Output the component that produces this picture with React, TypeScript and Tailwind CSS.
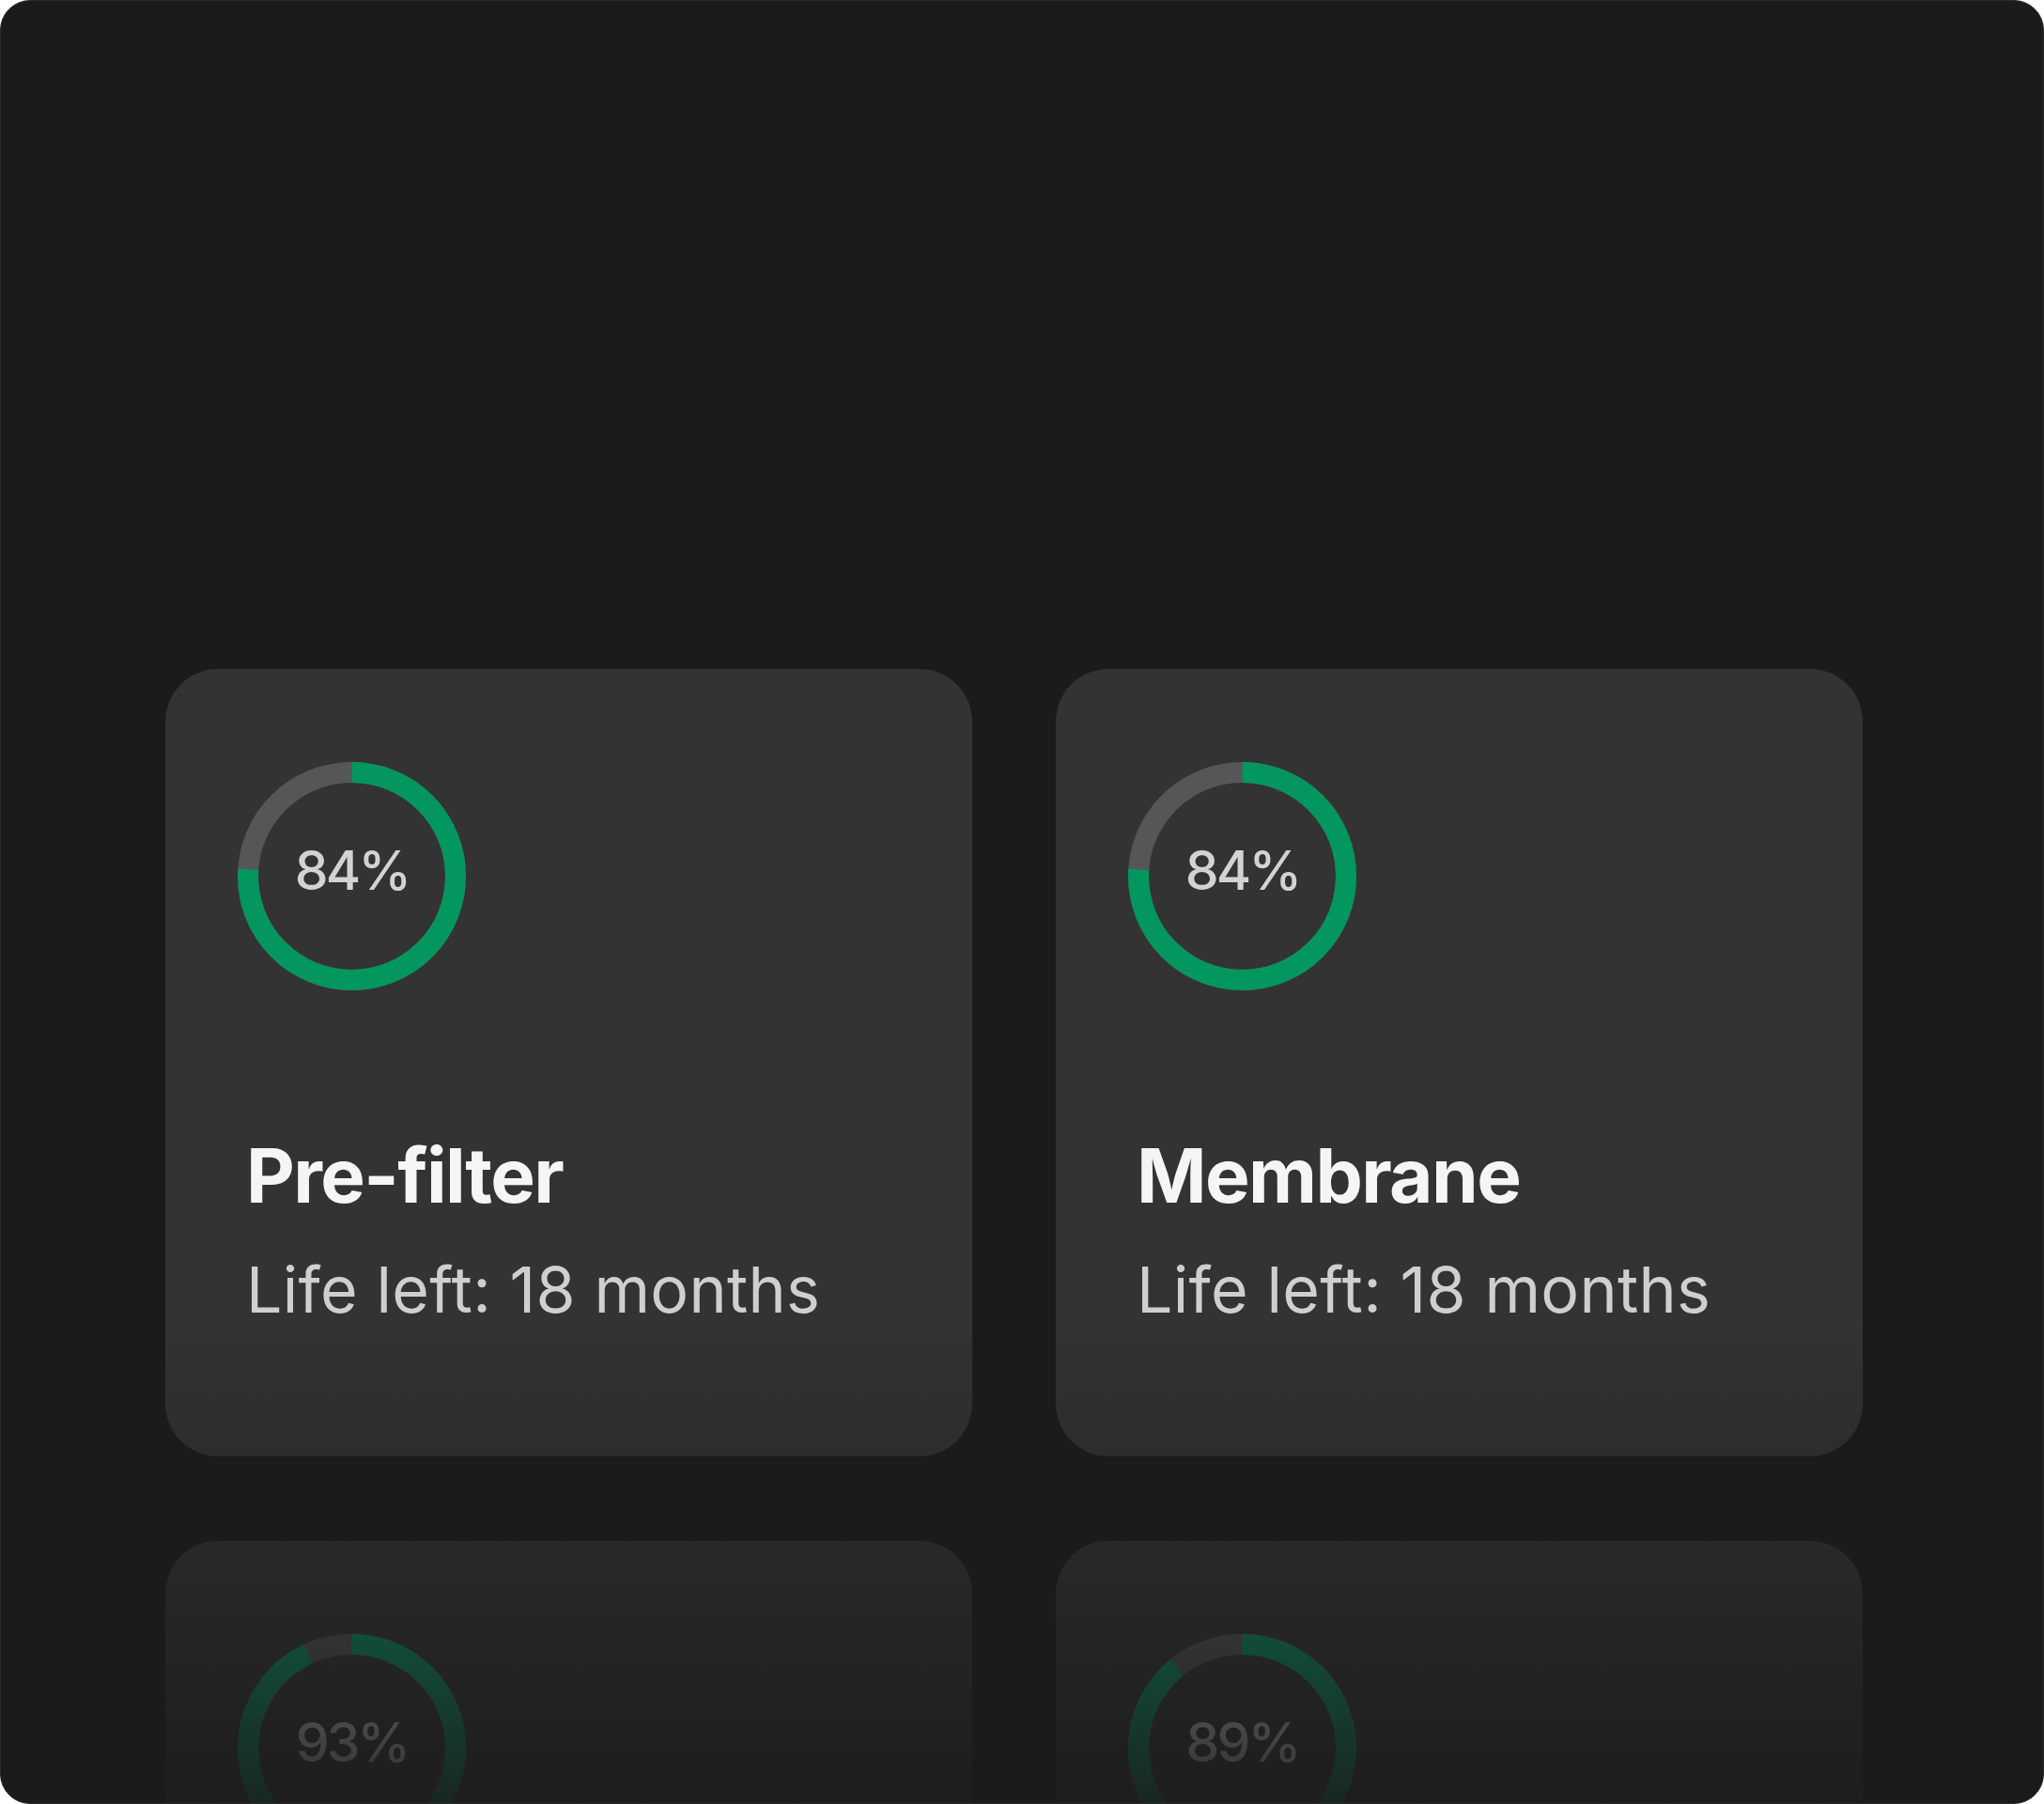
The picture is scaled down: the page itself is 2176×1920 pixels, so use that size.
import React from 'react';

type Filter = { name: string; life: string; pct: number; shown: number };

const filters: Filter[] = [
  { name: 'Pre-filter', life: 'Life left: 18 months', pct: 84, shown: 76 },
  { name: 'Membrane', life: 'Life left: 18 months', pct: 84, shown: 76 },
  { name: 'Carbon filter', life: 'Life left: 20 months', pct: 93, shown: 93 },
  { name: 'Post-filter', life: 'Life left: 19 months', pct: 89, shown: 89 },
];

function Ring({ pct, shown }: { pct: number; shown: number }) {
  const r = 110.5;
  const c = 2 * Math.PI * r;
  return (
    <div className="relative w-[243px] h-[243px]">
      <svg width="243" height="243" viewBox="0 0 243 243" className="-rotate-90">
        <circle cx="121.5" cy="121.5" r={r} fill="none" stroke="#565656" strokeWidth="22" />
        <circle
          cx="121.5"
          cy="121.5"
          r={r}
          fill="none"
          stroke="#03965f"
          strokeWidth="22"
          strokeDasharray={`${(c * shown) / 100} ${c}`}
        />
      </svg>
      <div className="absolute inset-0 flex items-center justify-center pb-[12px]">
        <span className="text-[57px] leading-none font-medium tracking-[-0.05em] text-[#d3d3d3]">{pct}%</span>
      </div>
    </div>
  );
}

function FilterCard({ f }: { f: Filter }) {
  return (
    <div className="h-[838px] rounded-[56px] bg-[#333333] pt-[99px] pl-[77px]">
      <Ring pct={f.pct} shown={f.shown} />
      <div className="ml-[9px] mt-[157px]">
        <p className="text-[80px] leading-none font-bold tracking-[-0.02em] text-[#f5f5f5]">{f.name}</p>
        <p className="mt-[47px] text-[68px] leading-none font-normal tracking-[0.005em] text-[#cfcfcf]">{f.life}</p>
      </div>
    </div>
  );
}

export default function App() {
  return (
    <div className="w-[2176px] h-[1920px] bg-white" style={{ fontFamily: 'Inter, "Noto Sans", sans-serif' }}>
      <div className="relative h-full overflow-hidden rounded-[32px] border border-[#2b2b2b] bg-[#1b1b1b]">
        <div className="grid grid-cols-[859px_859px] gap-x-[89px] gap-y-[90px] pl-[175px] pt-[711px]">
          {filters.map((f) => (
            <FilterCard key={f.name} f={f} />
          ))}
        </div>
        {/* fade-out over the lower rows */}
        <div className="pointer-events-none absolute inset-x-0 bottom-0 h-[520px] bg-gradient-to-b from-[#1b1b1b00] to-[#1b1b1be6]" />
      </div>
    </div>
  );
}
